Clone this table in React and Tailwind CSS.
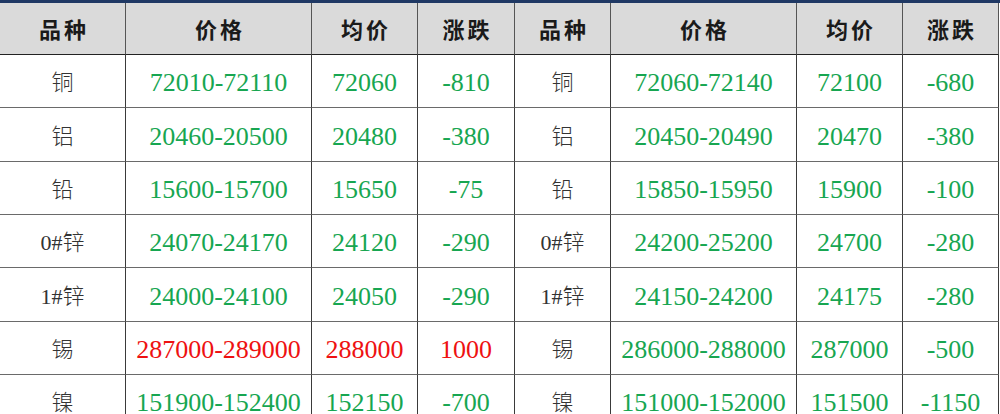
import React from 'react';

const headers = ['品种', '价格', '均价', '涨跌', '品种', '价格', '均价', '涨跌'];

// [name, price, avg, change, up?] for each half of the table
const rows = [
  [['铜', '72010-72110', '72060', '-810', false], ['铜', '72060-72140', '72100', '-680', false]],
  [['铝', '20460-20500', '20480', '-380', false], ['铝', '20450-20490', '20470', '-380', false]],
  [['铅', '15600-15700', '15650', '-75', false], ['铅', '15850-15950', '15900', '-100', false]],
  [['0#锌', '24070-24170', '24120', '-290', false], ['0#锌', '24200-25200', '24700', '-280', false]],
  [['1#锌', '24000-24100', '24050', '-290', false], ['1#锌', '24150-24200', '24175', '-280', false]],
  [['锡', '287000-289000', '288000', '1000', true], ['锡', '286000-288000', '287000', '-500', false]],
  [['镍', '151900-152400', '152150', '-700', false], ['镍', '151000-152000', '151500', '-1150', false]],
];

const rowHeights = ['h-[53px]', 'h-[54px]', 'h-[53px]', 'h-[53px]', 'h-[54px]', 'h-[53px]', 'h-[53px]'];

export default function App() {
  return (
    <div className="w-[1000px] bg-white">
      <div className="grid grid-cols-[126px_186px_106px_97px_96px_186px_106px_96px] border-t-[3px] border-[#1f3864]">
        {/* Header */}
        {headers.map((h, i) => (
          <div
            key={'h' + i}
            className="h-[52px] flex items-center justify-center bg-[#dadada] border-r border-b border-r-[#555] border-b-[#222] text-[22px] font-bold tracking-[3px] pl-[3px] text-[#1a1a1a] font-['Noto_Sans_CJK_SC',sans-serif]"
          >
            {h}
          </div>
        ))}

        {/* Data rows */}
        {rows.map((pair, r) =>
          pair.map((item, side) => {
            const [name, price, avg, chg, up] = item;
            const color = up ? 'text-[#ee1111]' : 'text-[#17a651]';
            const cell = `${rowHeights[r]} pt-[3px] flex items-center justify-center border-r border-b border-r-[#3a3a3a] border-b-[#6a6a6a] font-['Liberation_Serif','Noto_Sans_CJK_SC',serif]`;
            return (
              <React.Fragment key={r + '-' + side}>
                <div className={`${cell} text-[22px] font-light text-[#333]`}>{name}</div>
                <div className={`${cell} text-[26px] ${color}`}>{price}</div>
                <div className={`${cell} text-[26px] ${color}`}>{avg}</div>
                <div className={`${cell} text-[26px] ${color}`}>{chg}</div>
              </React.Fragment>
            );
          })
        )}
      </div>
    </div>
  );
}
